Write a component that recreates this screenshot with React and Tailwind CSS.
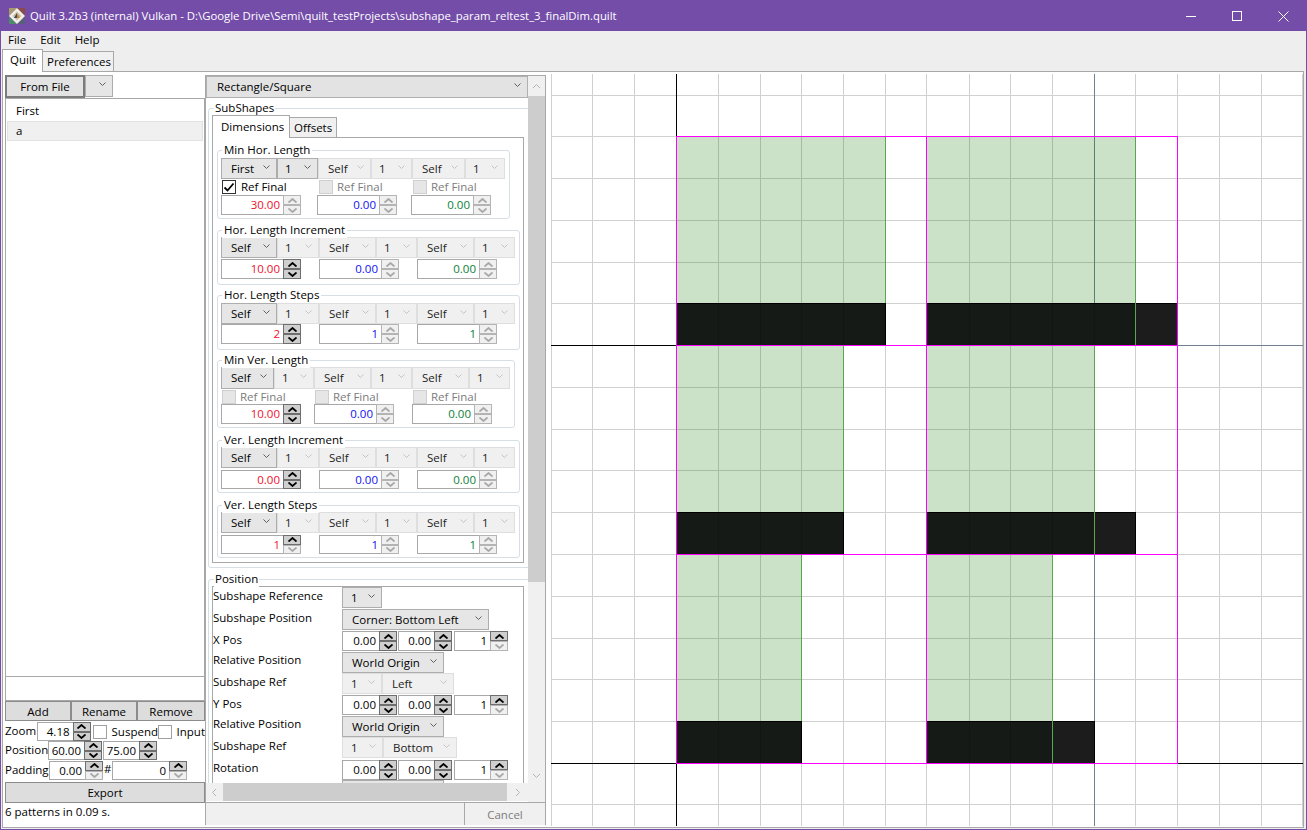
import React from 'react';

const RED = 'text-[#f0102c]';
const BLUE = 'text-[#1010f0]';
const GREEN = 'text-[#0a8038]';

const Chevron = ({ off }) => (
  <svg width="7" height="5" viewBox="0 0 7 5" className="mb-[3px] shrink-0">
    <path d="M0.5 0.5 L3.5 3.5 L6.5 0.5" fill="none" stroke={off ? '#c4c4c4' : '#606060'} strokeWidth="1" />
  </svg>
);

const Combo = ({ w, h = 21, label, off, pl = 9, main }) => (
  <div
    style={{ width: w, height: h }}
    className={`shrink-0 flex items-center justify-between pr-[6px] border ${
      off ? 'bg-[#f0f0f0] border-[#dedede] text-[#222]' : main ? 'bg-[#e3e3e3] border-[#b0b0b0]' : 'bg-[#e6e6e6] border-[#adadad]'
    }`}
  >
    <span style={{ paddingLeft: pl }} className="whitespace-nowrap">{label}</span>
    <Chevron off={off} />
  </div>
);

const Arrow = ({ dir, on }) => (
  <div className={`flex-1 flex items-center justify-center border ${on ? 'bg-[#cfcfcf] border-[#6e6e6e]' : 'bg-[#f0f0f0] border-[#b4b4b4]'}`}>
    <svg width="9" height="5" viewBox="0 0 9 5">
      <path
        d={dir === 'up' ? 'M0.5 4.5 L4.5 1 L8.5 4.5' : 'M0.5 0.5 L4.5 4 L8.5 0.5'}
        fill="none"
        stroke={on ? '#000' : '#a8a8a8'}
        strokeWidth="1.8"
      />
    </svg>
  </div>
);

const Spin = ({ w = 80, h = 20, value, color = 'text-black', up, down }) => (
  <div style={{ width: w, height: h }} className="shrink-0 flex border border-[#a8a8a8] bg-white">
    <div className={`flex-1 text-right pr-[3px] leading-[18px] ${color}`}>{value}</div>
    <div className="w-[18px] flex flex-col -my-[1px] -mr-[1px]">
      <Arrow dir="up" on={up} />
      <Arrow dir="down" on={down} />
    </div>
  </div>
);

const Check = ({ on, off, className = '' }) => (
  <div className={`w-[14px] h-[14px] shrink-0 border flex items-center justify-center ${off ? 'bg-[#e6e6e6] border-[#cfcfcf]' : on ? 'bg-white border-[#333]' : 'bg-white border-[#a0a0a0]'} ${className}`}>
    {on && (
      <svg width="12" height="12" viewBox="0 0 12 12">
        <path d="M1.5 6.5 L4.5 9.5 L10.5 2.5" fill="none" stroke="#000" strokeWidth="1.8" />
      </svg>
    )}
  </div>
);

const RefFinal = ({ w, on }) => (
  <div style={{ width: w }} className={`flex items-center ${on ? 'text-black' : 'text-[#7c7c7c]'}`}>
    <Check on={on} off={!on} className="ml-[1px]" />
    <span className={on ? 'ml-[5px]' : 'ml-[4px]'}>Ref Final</span>
  </div>
);

const Group = ({ title, w, h, mt, pt, children }) => (
  <div
    style={{ width: w, height: h, marginTop: mt, paddingTop: pt }}
    className="relative border border-[#d5dfe5] rounded-[3px] pl-[3px]"
  >
    <span className="absolute left-[4px] -top-[9px] bg-white px-[2px] leading-[16px] whitespace-nowrap">{title}</span>
    {children}
  </div>
);

// combo row: widths alternate name / index, only the first name is enabled
const ComboRow = ({ widths, first = 'Self', firstIdxOn, h = 21 }) => (
  <div className="flex">
    {widths.map((w, i) => (
      <Combo
        key={i}
        w={w}
        h={h}
        label={i === 0 ? first : i % 2 ? '1' : 'Self'}
        pl={i % 2 ? 7 : 9}
        off={!(i === 0 || (i === 1 && firstIdxOn))}
      />
    ))}
  </div>
);

const SpinRow = ({ xs, values, up, down, mt = 0, h = 20 }) => (
  <div className="flex" style={{ marginTop: mt }}>
    {values.map((v, i) => (
      <div key={i} style={{ width: xs[i] }}>
        <Spin
          h={h}
          value={v}
          color={[RED, BLUE, GREEN][i]}
          up={i === 0 && up}
          down={i === 0 && down}
        />
      </div>
    ))}
  </div>
);

const DimensionGroups = () => {
  const wide = [56, 42, 57, 41, 57, 41];
  const wideX = [98, 98, 98];
  return (
    <div className="w-[312px] h-[426px] border border-[#a8a8a8] pl-[4px]">
      <Group title="Min Hor. Length" w={293} h={69} mt={12} pt={7}>
        <ComboRow widths={[56, 41, 53, 41, 53, 40]} first="First" firstIdxOn />
        <div className="flex mt-[1px] h-[14px]">
          <RefFinal w={97} on />
          <RefFinal w={94} />
          <RefFinal w={94} />
        </div>
        <SpinRow xs={[96, 94, 94]} values={['30.00', '0.00', '0.00']} mt={1} />
      </Group>
      <Group title="Hor. Length Increment" w={303} h={55} mt={11} pt={6}>
        <ComboRow widths={wide} />
        <SpinRow xs={wideX} values={['10.00', '0.00', '0.00']} up down mt={1} />
      </Group>
      <Group title="Hor. Length Steps" w={303} h={55} mt={10} pt={7}>
        <ComboRow widths={wide} />
        <SpinRow xs={wideX} values={['2', '1', '1']} up down />
      </Group>
      <Group title="Min Ver. Length" w={298} h={68} mt={10} pt={6}>
        <ComboRow widths={[53, 40, 57, 41, 57, 41]} h={22} />
        <div className="flex mt-[1px] h-[14px]">
          <RefFinal w={93} />
          <RefFinal w={98} />
          <RefFinal w={94} />
        </div>
        <SpinRow xs={[93, 98, 94]} values={['10.00', '0.00', '0.00']} up down />
      </Group>
      <Group title="Ver. Length Increment" w={303} h={53} mt={12} pt={6}>
        <ComboRow widths={wide} />
        <SpinRow xs={wideX} values={['0.00', '0.00', '0.00']} up down mt={2} h={19} />
      </Group>
      <Group title="Ver. Length Steps" w={303} h={53} mt={12} pt={6}>
        <ComboRow widths={wide} />
        <SpinRow xs={wideX} values={['1', '1', '1']} up mt={2} h={19} />
      </Group>
    </div>
  );
};

const PosRow = ({ label, h, lh = 18, children }) => (
  <div style={{ height: h }} className="flex shrink-0">
    <div style={{ lineHeight: `${lh}px` }} className="w-[129px] shrink-0 whitespace-nowrap">{label}</div>
    <div className="flex">{children}</div>
  </div>
);

const TripleSpin = () => (
  <div className="flex gap-[1px]">
    <Spin w={55} value="0.00" up down />
    <Spin w={54} value="0.00" up down />
    <div className="ml-[1px]"><Spin w={54} value="1" up /></div>
  </div>
);

const PositionTable = () => (
  <div className="w-[312px] h-[200px] border border-[#a8a8a8] overflow-hidden">
    <PosRow label="Subshape Reference" h={22}><Combo w={40} label="1" pl={8} /></PosRow>
    <PosRow label="Subshape Position" h={22}><Combo w={147} label="Corner: Bottom Left" pl={9} /></PosRow>
    <PosRow label="X Pos" h={21}><TripleSpin /></PosRow>
    <PosRow label="Relative Position" h={21} lh={16}><Combo w={102} label="World Origin" pl={9} /></PosRow>
    <PosRow label="Subshape Ref" h={22}>
      <Combo w={40} label="1" pl={8} off />
      <Combo w={72} label="Left" pl={9} off />
    </PosRow>
    <PosRow label="Y Pos" h={21}><TripleSpin /></PosRow>
    <PosRow label="Relative Position" h={21} lh={16}><Combo w={102} label="World Origin" pl={9} /></PosRow>
    <PosRow label="Subshape Ref" h={23}>
      <Combo w={41} label="1" pl={8} off />
      <Combo w={74} label="Bottom" pl={9} off />
    </PosRow>
    <PosRow label="Rotation" h={20} lh={16}><TripleSpin /></PosRow>
    <PosRow label="Relative Position" h={21}><Combo w={102} label="World Origin" pl={9} /></PosRow>
  </div>
);

const ScrollArrow = ({ d }) => (
  <svg width="9" height="9" viewBox="0 0 9 9">
    <path d={d} fill="none" stroke="#b4b4b4" strokeWidth="1" />
  </svg>
);

const MiddlePanel = () => (
  <div className="w-[341px] h-[750px] flex flex-col border-t border-x border-[#a8a8a8]">
    <div className="flex h-[726px]">
      <div className="w-[322px] flex flex-col">
        <div className="flex-1 overflow-hidden">
          <Combo w={322} h={22} label="Rectangle/Square" pl={10} main />
          {/* subshapes group */}
          <div className="relative mt-[10px] ml-[2px] w-[340px] h-[460px] border border-[#d5dfe5] rounded-[3px] pl-[3px] pt-[6px]">
            <span className="absolute left-[5px] -top-[9px] bg-white px-[1px] leading-[16px]">SubShapes</span>
            <div className="flex items-end h-[22px]">
              <div className="relative z-10 w-[78px] h-[23px] -mb-[1px] bg-white border border-b-0 border-[#a8a8a8] pl-[8px] leading-[22px]">Dimensions</div>
              <div className="w-[47px] h-[20px] bg-[#f0f0f0] border border-[#a8a8a8] border-l-0 border-b-0 pl-[4px] leading-[19px]">Offsets</div>
            </div>
            <DimensionGroups />
          </div>
          {/* position group */}
          <div className="relative mt-[11px] ml-[2px] w-[340px] h-[220px] border border-[#d5dfe5] rounded-[3px] pl-[3px] pt-[6px]">
            <span className="absolute left-[5px] -top-[9px] bg-white px-[1px] leading-[16px]">Position</span>
            <PositionTable />
          </div>
        </div>
        <div className="h-[18px] bg-[#f0f0f0] flex items-center mb-[1px]">
          <div className="w-[17px] flex justify-center"><ScrollArrow d="M6 1 L2.5 4.5 L6 8" /></div>
          <div className="w-[284px] h-[18px] bg-[#cdcdcd]" />
          <div className="flex-1 flex justify-center"><ScrollArrow d="M3 1 L6.5 4.5 L3 8" /></div>
        </div>
      </div>
      <div className="w-[17px] bg-[#f0f0f0] flex flex-col items-center">
        <div className="h-[20px] flex items-center"><ScrollArrow d="M1 6 L4.5 2.5 L8 6" /></div>
        <div className="w-[17px] h-[486px] bg-[#cdcdcd]" />
        <div className="flex-1" />
        <div className="h-[18px] mb-[18px] flex items-center"><ScrollArrow d="M1 3 L4.5 6.5 L8 3" /></div>
      </div>
    </div>
    <div className="flex h-[23px] border-t border-[#a8a8a8] bg-[#f0f0f0]">
      <div className="w-[259px] border-r border-[#a8a8a8]" />
      <div className="flex-1 text-center text-[#7c7c7c] leading-[23px]">Cancel</div>
    </div>
  </div>
);

const SmallBtn = ({ w, label }) => (
  <div style={{ width: w }} className="h-[20px] bg-[#dddddd] border border-[#8c8c8c] text-center leading-[20px]">{label}</div>
);

const LeftPanel = () => (
  <div className="w-[200px] h-[750px] flex flex-col shrink-0">
    <div className="flex h-[23px] shrink-0">
      <div className="w-[80px] h-[23px] bg-[#e3e3e3] border-2 border-[#7c7c7c] text-center leading-[20px]">From File</div>
      <Combo w={28} h={22} label="" />
    </div>
    <div className="h-[578px] shrink-0 border border-[#a8a8a8] border-b-0 pt-[2px] px-[1px]">
      <div className="h-[20px] pl-[9px] leading-[20px]">First</div>
      <div className="h-[20px] bg-[#f0f0f0] border border-[#e2e2e2] pl-[8px] leading-[18px]">a</div>
    </div>
    <div className="h-[25px] shrink-0 border border-[#a8a8a8] bg-white" />
    <div className="flex shrink-0">
      <SmallBtn w={66} label="Add" />
      <SmallBtn w={66} label="Rename" />
      <SmallBtn w={68} label="Remove" />
    </div>
    <div className="flex h-[19px] shrink-0 items-start mt-[1px] whitespace-nowrap">
      <span className="w-[32px] leading-[17px]">Zoom</span>
      <Spin w={54} h={19} value="4.18" up down />
      <Check className="ml-[2px] mt-[3px]" />
      <span className="ml-[5px] w-[46px] leading-[20px]">Suspend</span>
      <Check className="mt-[3px]" />
      <span className="ml-[5px] leading-[20px]">Input</span>
    </div>
    <div className="flex h-[20px] shrink-0 items-start whitespace-nowrap">
      <span className="w-[43px] leading-[17px]">Position</span>
      <Spin w={54} h={19} value="60.00" up down />
      <div className="ml-[1px]"><Spin w={54} h={19} value="75.00" up down /></div>
    </div>
    <div className="flex h-[21px] shrink-0 items-start whitespace-nowrap">
      <span className="w-[44px] leading-[17px]">Padding</span>
      <Spin w={54} h={19} value="0.00" up />
      <span className="w-[9px] pl-[1px] leading-[15px]">#</span>
      <Spin w={75} h={19} value="0" up />
    </div>
    <div className="h-[21px] shrink-0 bg-[#dddddd] border border-[#8c8c8c] text-center leading-[20px]">Export</div>
    <div className="h-[22px] shrink-0 leading-[18px]">6 patterns in 0.09 s.</div>
  </div>
);

const xs = [551, 592, 634, 676, 718, 760, 801, 843, 885, 926, 969, 1010, 1052, 1094, 1135, 1177, 1219, 1261, 1302];
const ys = [95, 136, 178, 220, 262, 303, 345, 387, 429, 470, 512, 554, 596, 638, 679, 721, 763, 804];

const cells = [
  { x: 676, top: 136, edge: 885, black: 885, mid: 303, bottom: 345 },
  { x: 926, top: 136, edge: 1135, black: 1177, mid: 303, bottom: 345 },
  { x: 676, top: 345, edge: 843, black: 843, mid: 512, bottom: 554 },
  { x: 926, top: 345, edge: 1094, black: 1135, mid: 512, bottom: 554 },
  { x: 676, top: 554, edge: 801, black: 801, mid: 721, bottom: 763 },
  { x: 926, top: 554, edge: 1052, black: 1094, mid: 721, bottom: 763 },
];

const QuiltCanvas = () => (
  <svg width="752" height="752" viewBox="551 74 752 752" className="block shrink-0 ml-[5px] -mt-[1px]" shapeRendering="crispEdges">
    <rect x="551" y="74" width="752" height="752" fill="#fff" />
    {xs.map((x) => (
      <line key={x} x1={x + 0.5} x2={x + 0.5} y1="74" y2="826" stroke="#d0d0d0" />
    ))}
    {ys.map((y) => (
      <line key={y} x1="551" x2="1303" y1={y + 0.5} y2={y + 0.5} stroke="#d0d0d0" />
    ))}
    {/* axes and world lines */}
    <line x1="1094.5" x2="1094.5" y1="74" y2="826" stroke="#708090" />
    <line x1="551" x2="1303" y1="345.5" y2="345.5" stroke="#708090" />
    <line x1="551" x2="676" y1="345.5" y2="345.5" stroke="#000" />
    <line x1="676.5" x2="676.5" y1="74" y2="826" stroke="#000" />
    <line x1="551" x2="1303" y1="763.5" y2="763.5" stroke="#000" />
    {cells.map((c, i) => (
      <g key={i}>
        <rect x={c.x} y={c.top} width={c.edge - c.x} height={c.mid - c.top} fill="#137800" opacity="0.215" />
        <line x1={c.edge + 0.5} x2={c.edge + 0.5} y1={c.top} y2={c.mid} stroke="#5aa650" />
        <rect x={c.x} y={c.mid} width={c.black - c.x + 1} height={c.bottom - c.mid} fill="#1c1c1c" />
        <rect x={c.x} y={c.mid} width={c.edge - c.x} height={c.bottom - c.mid} fill="#161a16" />
        {xs.filter((x) => x > c.x && x < c.edge).map((x) => (
          <line key={x} x1={x + 0.5} x2={x + 0.5} y1={c.mid} y2={c.bottom} stroke="#121512" />
        ))}
        <line x1={c.x} x2={c.black + 1} y1={c.mid + 0.5} y2={c.mid + 0.5} stroke="#000" />
        <line x1={c.black + 0.5} x2={c.black + 0.5} y1={c.mid} y2={c.bottom} stroke="#000" />
        {c.black !== c.edge && (
          <line x1={c.edge + 0.5} x2={c.edge + 0.5} y1={c.mid} y2={c.bottom} stroke="#5aa650" />
        )}
      </g>
    ))}
    {/* tile outlines */}
    {[136, 345, 554, 763].map((y) => (
      <line key={y} x1="676" x2="1178" y1={y + 0.5} y2={y + 0.5} stroke="#ff00ff" />
    ))}
    {[676, 926, 1177].map((x) => (
      <line key={x} x1={x + 0.5} x2={x + 0.5} y1="136" y2="764" stroke="#ff00ff" />
    ))}
  </svg>
);

const AppIcon = () => (
  <svg width="18" height="18" viewBox="0 0 18 18" className="shrink-0">
    <path d="M1 1 H9 L1 9 Z" fill="#a89a6a" />
    <path d="M17 1 V9 L9 1 Z" fill="#8a4a48" />
    <path d="M1 17 V9 L9 17 Z" fill="#4f8a6a" />
    <path d="M17 17 H9 L17 9 Z" fill="#5a5f7a" />
    <path d="M9 1 L17 9 L9 17 L1 9 Z" fill="#f2efe6" />
    <path d="M9 4.5 L13.5 9 L9 13.5 L4.5 9 Z" fill="#c8c2a8" />
    <path d="M9 6 L12 11 H6 Z" fill="#d9852a" />
    <path d="M9 6 L9 11 H6 Z" fill="#2f4f7a" />
  </svg>
);

const TitleBar = () => (
  <div className="h-[30px] shrink-0 bg-[#744da9] flex items-center text-white pl-[7px] text-[11.35px]">
    <AppIcon />
    <span className="ml-[4px] whitespace-nowrap">Quilt 3.2b3 (internal) Vulkan - D:\Google Drive\Semi\quilt_testProjects\subshape_param_reltest_3_finalDim.quilt</span>
    <div className="ml-auto flex h-full">
      <div className="w-[46px] flex items-center justify-center">
        <svg width="10" height="10" viewBox="0 0 10 10"><path d="M0 5.5 H10" stroke="#fff" /></svg>
      </div>
      <div className="w-[46px] flex items-center justify-center">
        <svg width="10" height="10" viewBox="0 0 10 10"><rect x="0.5" y="0.5" width="9" height="9" fill="none" stroke="#fff" /></svg>
      </div>
      <div className="w-[46px] flex items-center justify-center">
        <svg width="11" height="11" viewBox="0 0 11 11"><path d="M0.5 0.5 L10.5 10.5 M10.5 0.5 L0.5 10.5" stroke="#fff" /></svg>
      </div>
    </div>
  </div>
);

export default function App() {
  return (
    <div
      className="w-[1307px] h-[830px] flex flex-col bg-[#eeeeee] border border-[#744da9] overflow-hidden text-black text-[11.5px]"
      style={{ fontFamily: '"Open Sans", "Noto Sans", sans-serif' }}
    >
      <TitleBar />
      <div className="h-[18px] shrink-0 flex items-center pl-[7px] gap-[14px]">
        <span>File</span>
        <span>Edit</span>
        <span>Help</span>
      </div>
      <div className="h-[22px] shrink-0 flex items-end pl-[1px]">
        <div className="relative z-10 w-[41px] h-[23px] -mb-[1px] bg-white border border-b-0 border-[#a8a8a8] pl-[7px] leading-[20px]">Quilt</div>
        <div className="w-[71px] h-[20px] bg-[#f0f0f0] border border-l-0 border-b-0 border-[#a8a8a8] pl-[4px] leading-[20px]">Preferences</div>
      </div>
      <div className="ml-[1px] w-[1302px] h-[757px] border border-[#a8a8a8] bg-white pl-[2px] pt-[3px] flex items-start">
        <LeftPanel />
        <MiddlePanel />
        <QuiltCanvas />
      </div>
    </div>
  );
}
